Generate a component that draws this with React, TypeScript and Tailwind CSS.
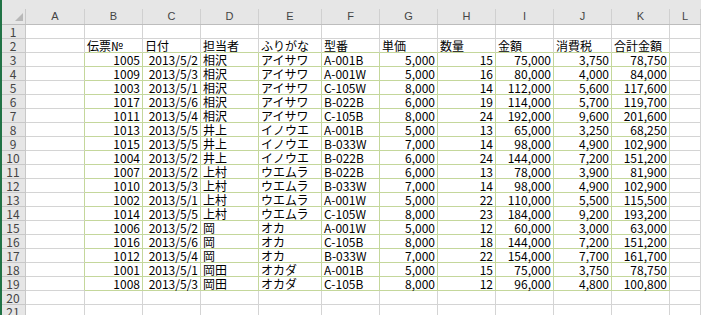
import React from "react";

const cols = ["A", "B", "C", "D", "E", "F", "G", "H", "I", "J", "K", "L"];

const heads = ["伝票№", "日付", "担当者", "ふりがな", "型番", "単価", "数量", "金額", "消費税", "合計金額"];

// 伝票No, 日付, 担当者, ふりがな, 型番, 単価, 数量, 金額, 消費税, 合計金額
const rows: string[][] = [
  ["1005", "2013/5/2", "相沢", "アイサワ", "A-001B", "5,000", "15", "75,000", "3,750", "78,750"],
  ["1009", "2013/5/3", "相沢", "アイサワ", "A-001W", "5,000", "16", "80,000", "4,000", "84,000"],
  ["1003", "2013/5/1", "相沢", "アイサワ", "C-105W", "8,000", "14", "112,000", "5,600", "117,600"],
  ["1017", "2013/5/6", "相沢", "アイサワ", "B-022B", "6,000", "19", "114,000", "5,700", "119,700"],
  ["1011", "2013/5/4", "相沢", "アイサワ", "C-105B", "8,000", "24", "192,000", "9,600", "201,600"],
  ["1013", "2013/5/5", "井上", "イノウエ", "A-001B", "5,000", "13", "65,000", "3,250", "68,250"],
  ["1015", "2013/5/5", "井上", "イノウエ", "B-033W", "7,000", "14", "98,000", "4,900", "102,900"],
  ["1004", "2013/5/2", "井上", "イノウエ", "B-022B", "6,000", "24", "144,000", "7,200", "151,200"],
  ["1007", "2013/5/2", "上村", "ウエムラ", "B-022B", "6,000", "13", "78,000", "3,900", "81,900"],
  ["1010", "2013/5/3", "上村", "ウエムラ", "B-033W", "7,000", "14", "98,000", "4,900", "102,900"],
  ["1002", "2013/5/1", "上村", "ウエムラ", "A-001W", "5,000", "22", "110,000", "5,500", "115,500"],
  ["1014", "2013/5/5", "上村", "ウエムラ", "C-105W", "8,000", "23", "184,000", "9,200", "193,200"],
  ["1006", "2013/5/2", "岡", "オカ", "A-001W", "5,000", "12", "60,000", "3,000", "63,000"],
  ["1016", "2013/5/6", "岡", "オカ", "C-105B", "8,000", "18", "144,000", "7,200", "151,200"],
  ["1012", "2013/5/4", "岡", "オカ", "B-033W", "7,000", "22", "154,000", "7,700", "161,700"],
  ["1001", "2013/5/1", "岡田", "オカダ", "A-001B", "5,000", "15", "75,000", "3,750", "78,750"],
  ["1008", "2013/5/3", "岡田", "オカダ", "C-105B", "8,000", "12", "96,000", "4,800", "100,800"],
];

// columns B..K: which are right aligned
const rightAlign = [true, true, false, false, false, true, true, true, true, true];

const gridCols = "grid grid-cols-[24px_59px_58px_58px_58px_63px_58px_58px_58px_58px_58px_58px_1fr]";

const RowHead = ({ n }: { n: number }) => (
  <div className="h-[14px] bg-[#e6e6e6] border-r border-b border-[#c8c8c8] text-[#444] text-[12px] leading-[13px] flex items-center justify-center pr-[1px]">
    {n}
  </div>
);

const Cell = ({ text = "", right = false, green = false, greenB = false, greenR = false }: { text?: string; right?: boolean; green?: boolean; greenB?: boolean; greenR?: boolean }) => {
  const bb = green || greenB ? "border-b-[#c4d79b]" : "border-b-[#d4d4d4]";
  const br = green || greenR ? "border-r-[#c4d79b]" : "border-r-[#d4d4d4]";
  return (
    <div
      className={`h-[14px] border-r border-b ${bb} ${br} overflow-visible whitespace-nowrap text-[12px] leading-[13px] text-black flex items-center ${right ? "justify-end pr-[2px]" : "justify-start pl-[2px]"}`}
    >
      {text}
    </div>
  );
};

export default function App() {
  const total = 21;
  return (
    <div className="w-[701px] h-[315px] overflow-hidden bg-white flex" style={{ fontFamily: '"Noto Sans CJK JP", sans-serif' }}>
      <div className="w-[2px] shrink-0 bg-[#217346]" />
      <div className="flex-1 min-w-0">
        {/* column header band */}
        <div className="h-[9px] bg-[#e6e6e6]" />
        <div className={`${gridCols} h-[16px] bg-[#e6e6e6] border-b border-[#bdbdbd]`}>
          <div className="relative border-r border-[#c8c8c8]">
            <svg width="8" height="8" className="absolute right-[2px] bottom-[3px]">
              <polygon points="8,0 8,8 0,8" fill="#b8b8b8" />
            </svg>
          </div>
          {cols.map((c) => (
            <div
              key={c}
              className="border-r border-[#d0d0d0] text-[#444] text-[11px] leading-[15px] flex items-end justify-center whitespace-nowrap overflow-visible"
              style={{ fontFamily: '"Liberation Sans", sans-serif' }}
            >
              {c}
            </div>
          ))}
        </div>

        <div className={gridCols}>
          {Array.from({ length: total }, (_, i) => {
            const r = i + 1;
            const data = r >= 3 && r <= 19 ? rows[r - 3] : null;
            return (
              <React.Fragment key={r}>
                <RowHead n={r} />
                {/* A */}
                <Cell greenR={!!data} />
                {/* B..K */}
                {heads.map((h, ci) => {
                  if (r === 2) return <Cell key={ci} text={h} greenB />;
                  if (data) return <Cell key={ci} text={data[ci]} right={rightAlign[ci]} green />;
                  return <Cell key={ci} />;
                })}
                {/* L */}
                <Cell />
              </React.Fragment>
            );
          })}
        </div>
      </div>
    </div>
  );
}
